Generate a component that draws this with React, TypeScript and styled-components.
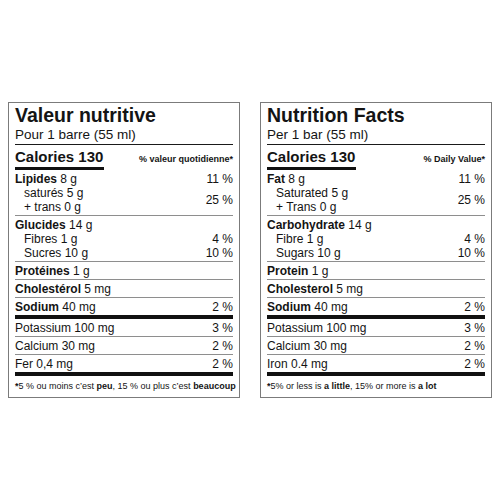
import { FC, ReactNode } from 'react'
import styled, { createGlobalStyle } from 'styled-components'

const GlobalStyle = createGlobalStyle`
    html, body {
        margin: 0;
        padding: 0;
        background: #ffffff;
    }
`;

const Page = styled.div`
    width: 500px;
    height: 500px;
    display: flex;
    align-items: center;
    justify-content: center;
    gap: 20px;
    font-family: "Liberation Sans", Arial, sans-serif;
    color: #141414;
`;

const Panel = styled.div`
    width: 232px;
    box-sizing: border-box;
    border: 1px solid #7b7b7b;
    padding: 1px 6px 0;
`;

const Title = styled.div`
    font-size: 19.5px;
    font-weight: bold;
    line-height: 23px;
`;

const Serving = styled.div`
    font-size: 13.5px;
    line-height: 16px;
    padding-bottom: 1px;
    border-bottom: 1px solid #1a1a1a;
`;

const CaloriesRow = styled.div`
    display: flex;
    justify-content: space-between;
    align-items: baseline;
    padding-top: 3px;
`;

const CaloriesLabel = styled.div`
    font-size: 15px;
    font-weight: bold;
    line-height: 18px;
    padding: 0 1px 1px 0;
    border-bottom: 3px solid #111;
`;

const DvHeader = styled.div`
    font-size: 9px;
    font-weight: bold;
`;

const Section = styled.div<{ $thick?: boolean }>`
    padding: 1.5px 0;
    border-bottom: ${p => p.$thick ? '4px solid #111' : '1px solid #8e8e8e'};
`;

const Row = styled.div<{ $sub?: boolean }>`
    display: flex;
    justify-content: space-between;
    font-size: 12px;
    line-height: 14px;
    padding-left: ${p => p.$sub ? '9px' : '0'};
`;

const Pair = styled.div`
    display: flex;
    justify-content: space-between;
    align-items: center;
    font-size: 12px;
    line-height: 14px;
    padding-left: 9px;
`;

const Name = styled.span`
    font-weight: bold;
`;

const Footnote = styled.div`
    font-size: 9px;
    line-height: 12px;
    padding: 4px 0 5px;
    white-space: nowrap;
`;

interface Strings {
    title: string
    serving: string
    dvHeader: string
    fat: string
    saturated: string
    trans: string
    carb: string
    fibre: string
    sugars: string
    protein: string
    cholesterol: string
    potassium: string
    iron: string
    ironAmount: string
    footnote: ReactNode
}

const fr: Strings = {
    title: 'Valeur nutritive',
    serving: 'Pour 1 barre (55 ml)',
    dvHeader: '% valeur quotidienne*',
    fat: 'Lipides',
    saturated: 'saturés',
    trans: '+ trans',
    carb: 'Glucides',
    fibre: 'Fibres',
    sugars: 'Sucres',
    protein: 'Protéines',
    cholesterol: 'Cholestérol',
    potassium: 'Potassium',
    iron: 'Fer',
    ironAmount: '0,4 mg',
    footnote: <><b>*</b>5 % ou moins c’est <b>peu</b>, 15 % ou plus c’est <b>beaucoup</b></>
}

const en: Strings = {
    title: 'Nutrition Facts',
    serving: 'Per 1 bar (55 ml)',
    dvHeader: '% Daily Value*',
    fat: 'Fat',
    saturated: 'Saturated',
    trans: '+ Trans',
    carb: 'Carbohydrate',
    fibre: 'Fibre',
    sugars: 'Sugars',
    protein: 'Protein',
    cholesterol: 'Cholesterol',
    potassium: 'Potassium',
    iron: 'Iron',
    ironAmount: '0.4 mg',
    footnote: <><b>*</b>5% or less is <b>a little</b>, 15% or more is <b>a lot</b></>
}

const NutritionLabel: FC<{ t: Strings }> = ({ t }) => {
    return (
        <Panel>
            <Title>{t.title}</Title>
            <Serving>{t.serving}</Serving>
            <CaloriesRow>
                <CaloriesLabel>Calories 130</CaloriesLabel>
                <DvHeader>{t.dvHeader}</DvHeader>
            </CaloriesRow>

            <Section>
                <Row><span><Name>{t.fat}</Name> 8 g</span><span>11 %</span></Row>
                <Pair>
                    <div>
                        <div>{t.saturated} 5 g</div>
                        <div>{t.trans} 0 g</div>
                    </div>
                    <span>25 %</span>
                </Pair>
            </Section>

            <Section>
                <Row><span><Name>{t.carb}</Name> 14 g</span></Row>
                <Row $sub><span>{t.fibre} 1 g</span><span>4 %</span></Row>
                <Row $sub><span>{t.sugars} 10 g</span><span>10 %</span></Row>
            </Section>

            <Section>
                <Row><span><Name>{t.protein}</Name> 1 g</span></Row>
            </Section>

            <Section>
                <Row><span><Name>{t.cholesterol}</Name> 5 mg</span></Row>
            </Section>

            <Section $thick>
                <Row><span><Name>Sodium</Name> 40 mg</span><span>2 %</span></Row>
            </Section>

            <Section>
                <Row><span>{t.potassium} 100 mg</span><span>3 %</span></Row>
            </Section>

            <Section>
                <Row><span>Calcium 30 mg</span><span>2 %</span></Row>
            </Section>

            <Section $thick>
                <Row><span>{t.iron} {t.ironAmount}</span><span>2 %</span></Row>
            </Section>

            <Footnote>{t.footnote}</Footnote>
        </Panel>
    )
}

const App: FC = () => {
    return (
        <>
            <GlobalStyle />
            <Page>
                <NutritionLabel t={fr} />
                <NutritionLabel t={en} />
            </Page>
        </>
    )
}

export default App
